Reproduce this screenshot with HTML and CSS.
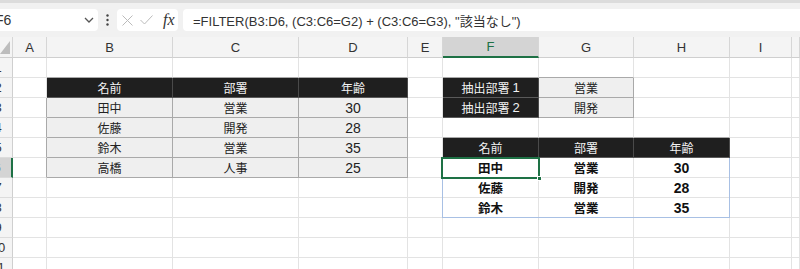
FILE: index.html
```html
<html>
    <head>
        <meta charset="utf-8">
        <title>FILTER</title>
        <link rel="stylesheet" href="styles.css">
    </head>
    <body>
        <div class="toolbar">
            <div class="namebox">
                <span>F6</span>
                <svg width="10" height="6" viewBox="0 0 10 6"><path d="M1 1 L5 5 L9 1" fill="none" stroke="#555" stroke-width="1.3"/></svg>
            </div>
            <div class="dots">
                <svg width="3" height="12" viewBox="0 0 3 12"><circle cx="1.5" cy="1.5" r="1.2" fill="#444"/><circle cx="1.5" cy="6" r="1.2" fill="#444"/><circle cx="1.5" cy="10.5" r="1.2" fill="#444"/></svg>
            </div>
            <div class="fxbox">
                <svg width="11" height="11" viewBox="0 0 11 11"><path d="M0.5 0.5 L10.5 10.5 M10.5 0.5 L0.5 10.5" stroke="#bbb" stroke-width="1"/></svg>
                <svg width="13" height="10" viewBox="0 0 13 10"><path d="M0.5 5 L4.5 9 L12.5 0.5" fill="none" stroke="#bbb" stroke-width="1"/></svg>
                <span class="fx">fx</span>
            </div>
            <div class="formula">=FILTER(B3:D6, (C3:C6=G2) + (C3:C6=G3), "該当なし")</div>
        </div>

        <div class="sheet">
            <!-- column headers -->
            <div class="ch corner"></div>
            <div class="ch">A</div><div class="ch">B</div><div class="ch">C</div><div class="ch">D</div><div class="ch">E</div>
            <div class="ch sel">F</div><div class="ch">G</div><div class="ch">H</div><div class="ch">I</div><div class="ch"></div>

            <!-- 1 -->
            <div class="rh"><span>1</span></div>
            <div class="c"></div><div class="c top"></div><div class="c top"></div><div class="c top"></div><div class="c"></div>
            <div class="c top"></div><div class="c top"></div><div class="c"></div><div class="c"></div><div class="c"></div>

            <!-- 2 -->
            <div class="rh"><span>2</span></div>
            <div class="c"></div><div class="c dk">名前</div><div class="c dk">部署</div><div class="c dk">年齢</div><div class="c"></div>
            <div class="c dk">抽出部署 <span class="n">1</span></div><div class="c lt">営業</div><div class="c"></div><div class="c"></div><div class="c"></div>

            <!-- 3 -->
            <div class="rh"><span>3</span></div>
            <div class="c edge"></div><div class="c lt">田中</div><div class="c lt">営業</div><div class="c lt num">30</div><div class="c"></div>
            <div class="c dk">抽出部署 <span class="n">2</span></div><div class="c lt">開発</div><div class="c"></div><div class="c"></div><div class="c"></div>

            <!-- 4 -->
            <div class="rh"><span>4</span></div>
            <div class="c edge"></div><div class="c lt">佐藤</div><div class="c lt">開発</div><div class="c lt num">28</div><div class="c"></div>
            <div class="c top"></div><div class="c top"></div><div class="c top"></div><div class="c"></div><div class="c"></div>

            <!-- 5 -->
            <div class="rh"><span>5</span></div>
            <div class="c edge"></div><div class="c lt">鈴木</div><div class="c lt">営業</div><div class="c lt num">35</div><div class="c"></div>
            <div class="c dk">名前</div><div class="c dk">部署</div><div class="c dk">年齢</div><div class="c"></div><div class="c"></div>

            <!-- 6 -->
            <div class="rh sel"><span>6</span></div>
            <div class="c edge"></div><div class="c lt">高橋</div><div class="c lt">人事</div><div class="c lt num">25</div><div class="c"></div>
            <div class="c out cur">田中<span class="spill"></span><span class="active"><span class="handle"></span></span></div>
            <div class="c out">営業</div><div class="c out num">30</div><div class="c"></div><div class="c"></div>

            <!-- 7 -->
            <div class="rh"><span>7</span></div>
            <div class="c"></div><div class="c"></div><div class="c"></div><div class="c"></div><div class="c"></div>
            <div class="c out">佐藤</div><div class="c out">開発</div><div class="c out num">28</div><div class="c"></div><div class="c"></div>

            <!-- 8 -->
            <div class="rh"><span>8</span></div>
            <div class="c"></div><div class="c"></div><div class="c"></div><div class="c"></div><div class="c"></div>
            <div class="c out">鈴木</div><div class="c out">営業</div><div class="c out num">35</div><div class="c"></div><div class="c"></div>

            <!-- 9 -->
            <div class="rh"><span>9</span></div>
            <div class="c"></div><div class="c"></div><div class="c"></div><div class="c"></div><div class="c"></div>
            <div class="c"></div><div class="c"></div><div class="c"></div><div class="c"></div><div class="c"></div>

            <!-- 10 -->
            <div class="rh"><span>10</span></div>
            <div class="c"></div><div class="c"></div><div class="c"></div><div class="c"></div><div class="c"></div>
            <div class="c"></div><div class="c"></div><div class="c"></div><div class="c"></div><div class="c"></div>

            <!-- 11 -->
            <div class="rh"><span>11</span></div>
            <div class="c"></div><div class="c"></div><div class="c"></div><div class="c"></div><div class="c"></div>
            <div class="c"></div><div class="c"></div><div class="c"></div><div class="c"></div><div class="c"></div>
        </div>
    </body>
</html>
```

FILE: styles.css
```css
* {
    box-sizing: border-box;
}
body {
    margin: 0;
    width: 800px;
    height: 269px;
    overflow: hidden;
    background: #fff;
    font-family: "Liberation Sans", "Noto Sans CJK JP", sans-serif;
    color: #222;
}

/* formula bar */
.toolbar {
    height: 37px;
    background: #f1f1f1;
    border-top: 3px solid #dcdcdc;
    display: flex;
    align-items: center;
}
.namebox {
    width: 108px;
    height: 22px;
    margin-left: -10px;
    padding: 0 4px 0 5px;
    background: #fff;
    border-radius: 4px;
    display: flex;
    align-items: center;
    justify-content: space-between;
    font-size: 14px;
    color: #333;
}
.dots {
    width: 19px;
    display: flex;
    justify-content: center;
}
.fxbox {
    width: 61px;
    height: 22px;
    background: #fff;
    border-radius: 4px;
    display: flex;
    align-items: center;
    padding-left: 5px;
    gap: 7px;
}
.fx {
    font-family: "Liberation Serif", serif;
    font-style: italic;
    font-size: 16px;
    color: #333;
    margin-left: 3px;
}
.formula {
    flex: 1;
    height: 22px;
    margin-left: 5px;
    padding-left: 10px;
    background: #fff;
    border-radius: 4px 0 0 4px;
    display: flex;
    align-items: center;
    font-size: 13px;
    color: #333;
    white-space: nowrap;
}

/* grid */
.sheet {
    display: grid;
    grid-template-columns: 13px 34px 126px 126px 109px 35px 96px 95px 96px 62px 8px;
    grid-template-rows: 21px;
    grid-auto-rows: 20px;
    font-size: 12px;
}
.sheet > div {
    border-right: 1px solid #e3e3e3;
    border-bottom: 1px solid #e3e3e3;
    display: flex;
    align-items: center;
    justify-content: center;
    overflow: hidden;
    white-space: nowrap;
}
.sheet > .ch {
    background: #f4f4f4;
    border-right-color: #d6d6d6;
    border-bottom-color: #cfcfcf;
    color: #333;
    font-size: 13px;
}
.sheet > .ch.sel {
    background: #d4d4d4;
    color: #1e7145;
    border-bottom: 2px solid #1e7145;
}
.corner {
    position: relative;
}
.corner:after {
    content: '';
    position: absolute;
    right: 2px;
    bottom: 3px;
    border-left: 10px solid transparent;
    border-bottom: 13px solid #bdbdbd;
}
.sheet > .rh {
    background: #f4f4f4;
    border-right-color: #cfcfcf;
    border-bottom-color: #dcdcdc;
    justify-content: flex-end;
    color: #333;
    font-size: 13px;
}
.rh span {
    flex: none;
    width: 28px;
    text-align: center;
}
.sheet > .rh.sel {
    background: #d4d4d4;
    border-right: 2px solid #1e7145;
}

.sheet > .top {
    border-bottom-color: #a9a9a9;
}
.sheet > .edge {
    border-right-color: #a9a9a9;
}
.sheet > .dk {
    background: #1f1f1f;
    color: #f2f2f2;
    border-right-color: #4a4a4a;
    border-bottom-color: #5a5a5a;
}
.sheet > .lt {
    background: #efefef;
    border-right-color: #a9a9a9;
    border-bottom-color: #a9a9a9;
}
.n {
    margin-left: 3px;
    font-size: 13px;
}
.out {
    font-weight: bold;
    font-size: 12.5px;
    color: #111;
}
.sheet > .num {
    font-size: 14px;
}

/* spill range and active cell, drawn over the grid */
.sheet > .cur {
    position: relative;
    overflow: visible;
}
.spill {
    position: absolute;
    left: -1px;
    top: 0;
    width: 288px;
    height: 60px;
    border: 1px solid #a8c0e4;
    border-top: none;
}
.active {
    position: absolute;
    left: -2px;
    top: -1px;
    right: -2px;
    bottom: -2px;
    border: 2px solid #1e7145;
}
.handle {
    position: absolute;
    right: -4px;
    bottom: -4px;
    width: 5px;
    height: 5px;
    background: #1e7145;
    border: 1px solid #fff;
}
```
